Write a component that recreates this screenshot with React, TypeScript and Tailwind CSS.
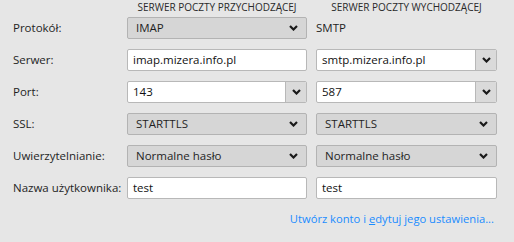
import React from 'react';

const Chevron = () => (
  <svg width="9" height="6" viewBox="0 0 9 6" className="shrink-0">
    <path d="M1 1 L4.5 4.5 L8 1" fill="none" stroke="#1a1a1a" strokeWidth="2.2" />
  </svg>
);

const Select = ({ value }: { value: string }) => (
  <div className="flex h-[22px] items-center justify-between rounded-[2px] border border-[#b3b3b3] bg-[#d6d6d6] pl-[8px] pr-[8px] text-[#1f1f1f]">
    <span>{value}</span>
    <Chevron />
  </div>
);

const Input = ({ value, dropdown = false }: { value: string; dropdown?: boolean }) => (
  <div className="flex h-[22px] items-stretch overflow-hidden rounded-[2px] border border-[#b8b8b8] bg-white text-[#111]">
    <span className="flex flex-1 items-center pl-[5px]">{value}</span>
    {dropdown && (
      <span className="flex w-[21px] items-center justify-center border-l border-[#b8b8b8] bg-[#dadada]">
        <Chevron />
      </span>
    )}
  </div>
);

const Label = ({ children }: { children: React.ReactNode }) => (
  <div className="flex h-[22px] items-center whitespace-nowrap text-[#1f1f1f]">{children}</div>
);

export default function App() {
  return (
    <div
      className="h-[242px] w-[514px] bg-[#e6e6e6] pl-[13px] text-[11.5px]"
      style={{ fontFamily: '"Open Sans", "Noto Sans", sans-serif' }}
    >
      {/* column headers */}
      <div className="grid h-[13px] grid-cols-[105px_180px_181px] gap-x-[9px]">
        <div />
        <div className="flex items-center justify-center whitespace-nowrap text-[10px] text-[#2a2a2a]">
          SERWER POCZTY PRZYCHODZĄCEJ
        </div>
        <div className="flex items-center justify-center whitespace-nowrap text-[10px] text-[#2a2a2a]">
          SERWER POCZTY WYCHODZĄCEJ
        </div>
      </div>

      <div className="mt-[4px] grid grid-cols-[105px_180px_181px] gap-x-[9px] gap-y-[10px]">
        <Label>Protokół:</Label>
        <Select value="IMAP" />
        <div className="flex h-[22px] items-center text-[#1f1f1f]">SMTP</div>

        <Label>Serwer:</Label>
        <Input value="imap.mizera.info.pl" />
        <Input value="smtp.mizera.info.pl" dropdown />

        <Label>Port:</Label>
        <Input value="143" dropdown />
        <Input value="587" dropdown />

        <Label>SSL:</Label>
        <Select value="STARTTLS" />
        <Select value="STARTTLS" />

        <Label>Uwierzytelnianie:</Label>
        <Select value="Normalne hasło" />
        <Select value="Normalne hasło" />

        <Label>Nazwa użytkownika:</Label>
        <Input value="test" />
        <Input value="test" />
      </div>
      <div className="mt-[12px] flex justify-end pr-[20px] text-[11.2px] text-[#1a8cff]">
        <span>
          Utwórz konto i <span className="underline">e</span>dytuj jego ustawienia...
        </span>
      </div>
    </div>
  );
}
